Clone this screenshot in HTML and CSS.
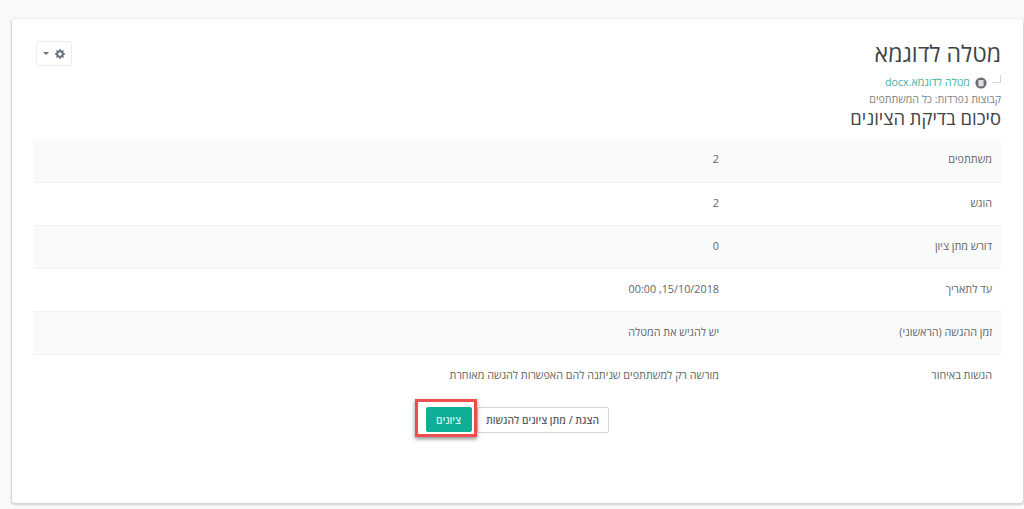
FILE: index.html
```html
<!DOCTYPE html>
<html lang="he" dir="rtl">
<head>
<meta charset="utf-8">
<title>מטלה לדוגמא</title>
<link rel="stylesheet" href="styles.css">
</head>
<body>
<main class="card">
  <header class="head">
    <div class="head-text">
      <h1 class="title">מטלה לדוגמא</h1>
      <div class="file-row">
        <span class="tree-mark"></span>
        <svg class="file-icon" viewBox="0 0 12 12" width="12" height="12"><circle cx="6" cy="6" r="5.6" fill="#6a6f73"/><rect x="3.4" y="3" width="5.2" height="6.2" rx=".6" fill="#dfe0e1"/></svg>
        <a class="file-link">מטלה לדוגמא.docx</a>
      </div>
      <div class="groups">קבוצות נפרדות: כל המשתתפים</div>
      <h2 class="subtitle">סיכום בדיקת הציונים</h2>
    </div>
    <button class="gear-btn" type="button" aria-label="הגדרות">
      <svg class="gear" viewBox="0 0 12 12" width="10" height="10"><circle cx="6" cy="6" r="3.4" fill="none" stroke="#66717f" stroke-width="2.4"/><path d="M6 0v2.4M6 9.6V12M0 6h2.4M9.6 6H12M1.8 1.8l1.7 1.7M8.5 8.5l1.7 1.7M10.2 1.8L8.5 3.5M3.5 8.5l-1.7 1.7" stroke="#66717f" stroke-width="1.7"/></svg>
      <span class="caret"></span>
    </button>
  </header>
  <table class="summary">
    <tbody>
      <tr class="odd"><th>משתתפים</th><td>2</td></tr>
      <tr><th>הוגש</th><td>2</td></tr>
      <tr class="odd"><th>דורש מתן ציון</th><td>0</td></tr>
      <tr><th>עד לתאריך</th><td>15/10/2018, 00:00</td></tr>
      <tr class="odd"><th>זמן ההגשה (הראשוני)</th><td>יש להגיש את המטלה</td></tr>
      <tr><th>הגשות באיחור</th><td>מורשה רק למשתתפים שניתנה להם האפשרות להגשה מאוחרת</td></tr>
    </tbody>
  </table>
  <div class="actions">
    <a class="btn btn-light">הצגת / מתן ציונים להגשות</a>
    <span class="highlight"><a class="btn btn-primary">ציונים</a></span>
  </div>
</main>
</body>
</html>
```
FILE: styles.css
```css
* { box-sizing: border-box; }
html, body { height: 100%; }
body {
  margin: 0;
  height: 509px;
  overflow: hidden;
  background: #f9f9f9;
  font-family: "Open Sans", "Noto Sans", sans-serif;
  color: #5f6468;
  padding: 19px 1px 0 12px;
}
.card {
  width: 1011px;
  height: 484px;
  background: #fff;
  border-radius: 3px;
  box-shadow: 0 1px 2px 1px rgba(0,0,0,.16);
  padding: 21px 22px 0 21px;
}
.head { display: flex; justify-content: space-between; align-items: flex-start; }
.head-text { display: flex; flex-direction: column; align-items: flex-start; }
.title {
  margin: 0;
  font-size: 23.1px;
  line-height: 27px;
  font-weight: 400;
  color: #3f4447;
}
.file-row { display: flex; align-items: center; margin-top: 8px; height: 14px; font-size: 10.7px; }
.tree-mark { width: 9px; height: 8px; margin: -7px 0 0 5px; border-right: 1px solid #d4d4d4; border-bottom: 1px solid #d4d4d4; }
.file-icon { margin: 2px 0 0 5px; }
.file-link { color: #3fb0a0; line-height: 14px; }
.groups { margin-top: 3px; font-size: 10.6px; line-height: 14px; color: #7d8285; }
.subtitle {
  margin: 1px 0 0;
  font-size: 18.4px;
  line-height: 21px;
  font-weight: 400;
  color: #3f4447;
}
.gear-btn {
  display: flex;
  align-items: center;
  justify-content: center;
  gap: 6px;
  width: 36px;
  height: 25px;
  margin: 1px 0 0 3px;
  padding: 0;
  background: #fff;
  border: 1px solid #ececec;
  border-radius: 3px;
}
.caret { width: 0; height: 0; border-left: 3px solid transparent; border-right: 3px solid transparent; border-top: 3px solid #66717f; }
.summary {
  width: 968px;
  margin-top: 11px;
  border-collapse: collapse;
  table-layout: fixed;
  font-size: 10.8px;
}
.summary tr { height: 43px; border-bottom: 1px solid #f1f3f3; }
.summary tr:last-child { border-bottom: 0; }
.summary .odd { background: #f9fbfb; }
.summary th { width: 282px; padding: 0 9px 3px 12px; font-weight: 400; text-align: right; color: #5f6468; }
.summary td { padding: 0 0 3px 12px; text-align: right; color: #5f6468; }
.actions { display: flex; justify-content: center; align-items: flex-start; margin-top: 2px; padding-right: 11px; }
.btn { display: block; height: 26px; line-height: 24px; font-size: 10.2px; font-weight: 600; border-radius: 2px; text-align: center; }
.btn-light { width: 132px; margin-top: 8px; background: #fff; border: 1px solid #d5d5d5; color: #5a5f63; }
.highlight {
  display: block;
  padding: 5px 2px 2px 8px;
  border: 3px solid #ef4e4e;
  box-shadow: 0 2px 4px rgba(0,0,0,.45);
  background: #fff;
}
.btn-primary { width: 46px; height: 25px; background: #0fae97; border: 1px solid #0fae97; color: #d8f3ee; }
```
